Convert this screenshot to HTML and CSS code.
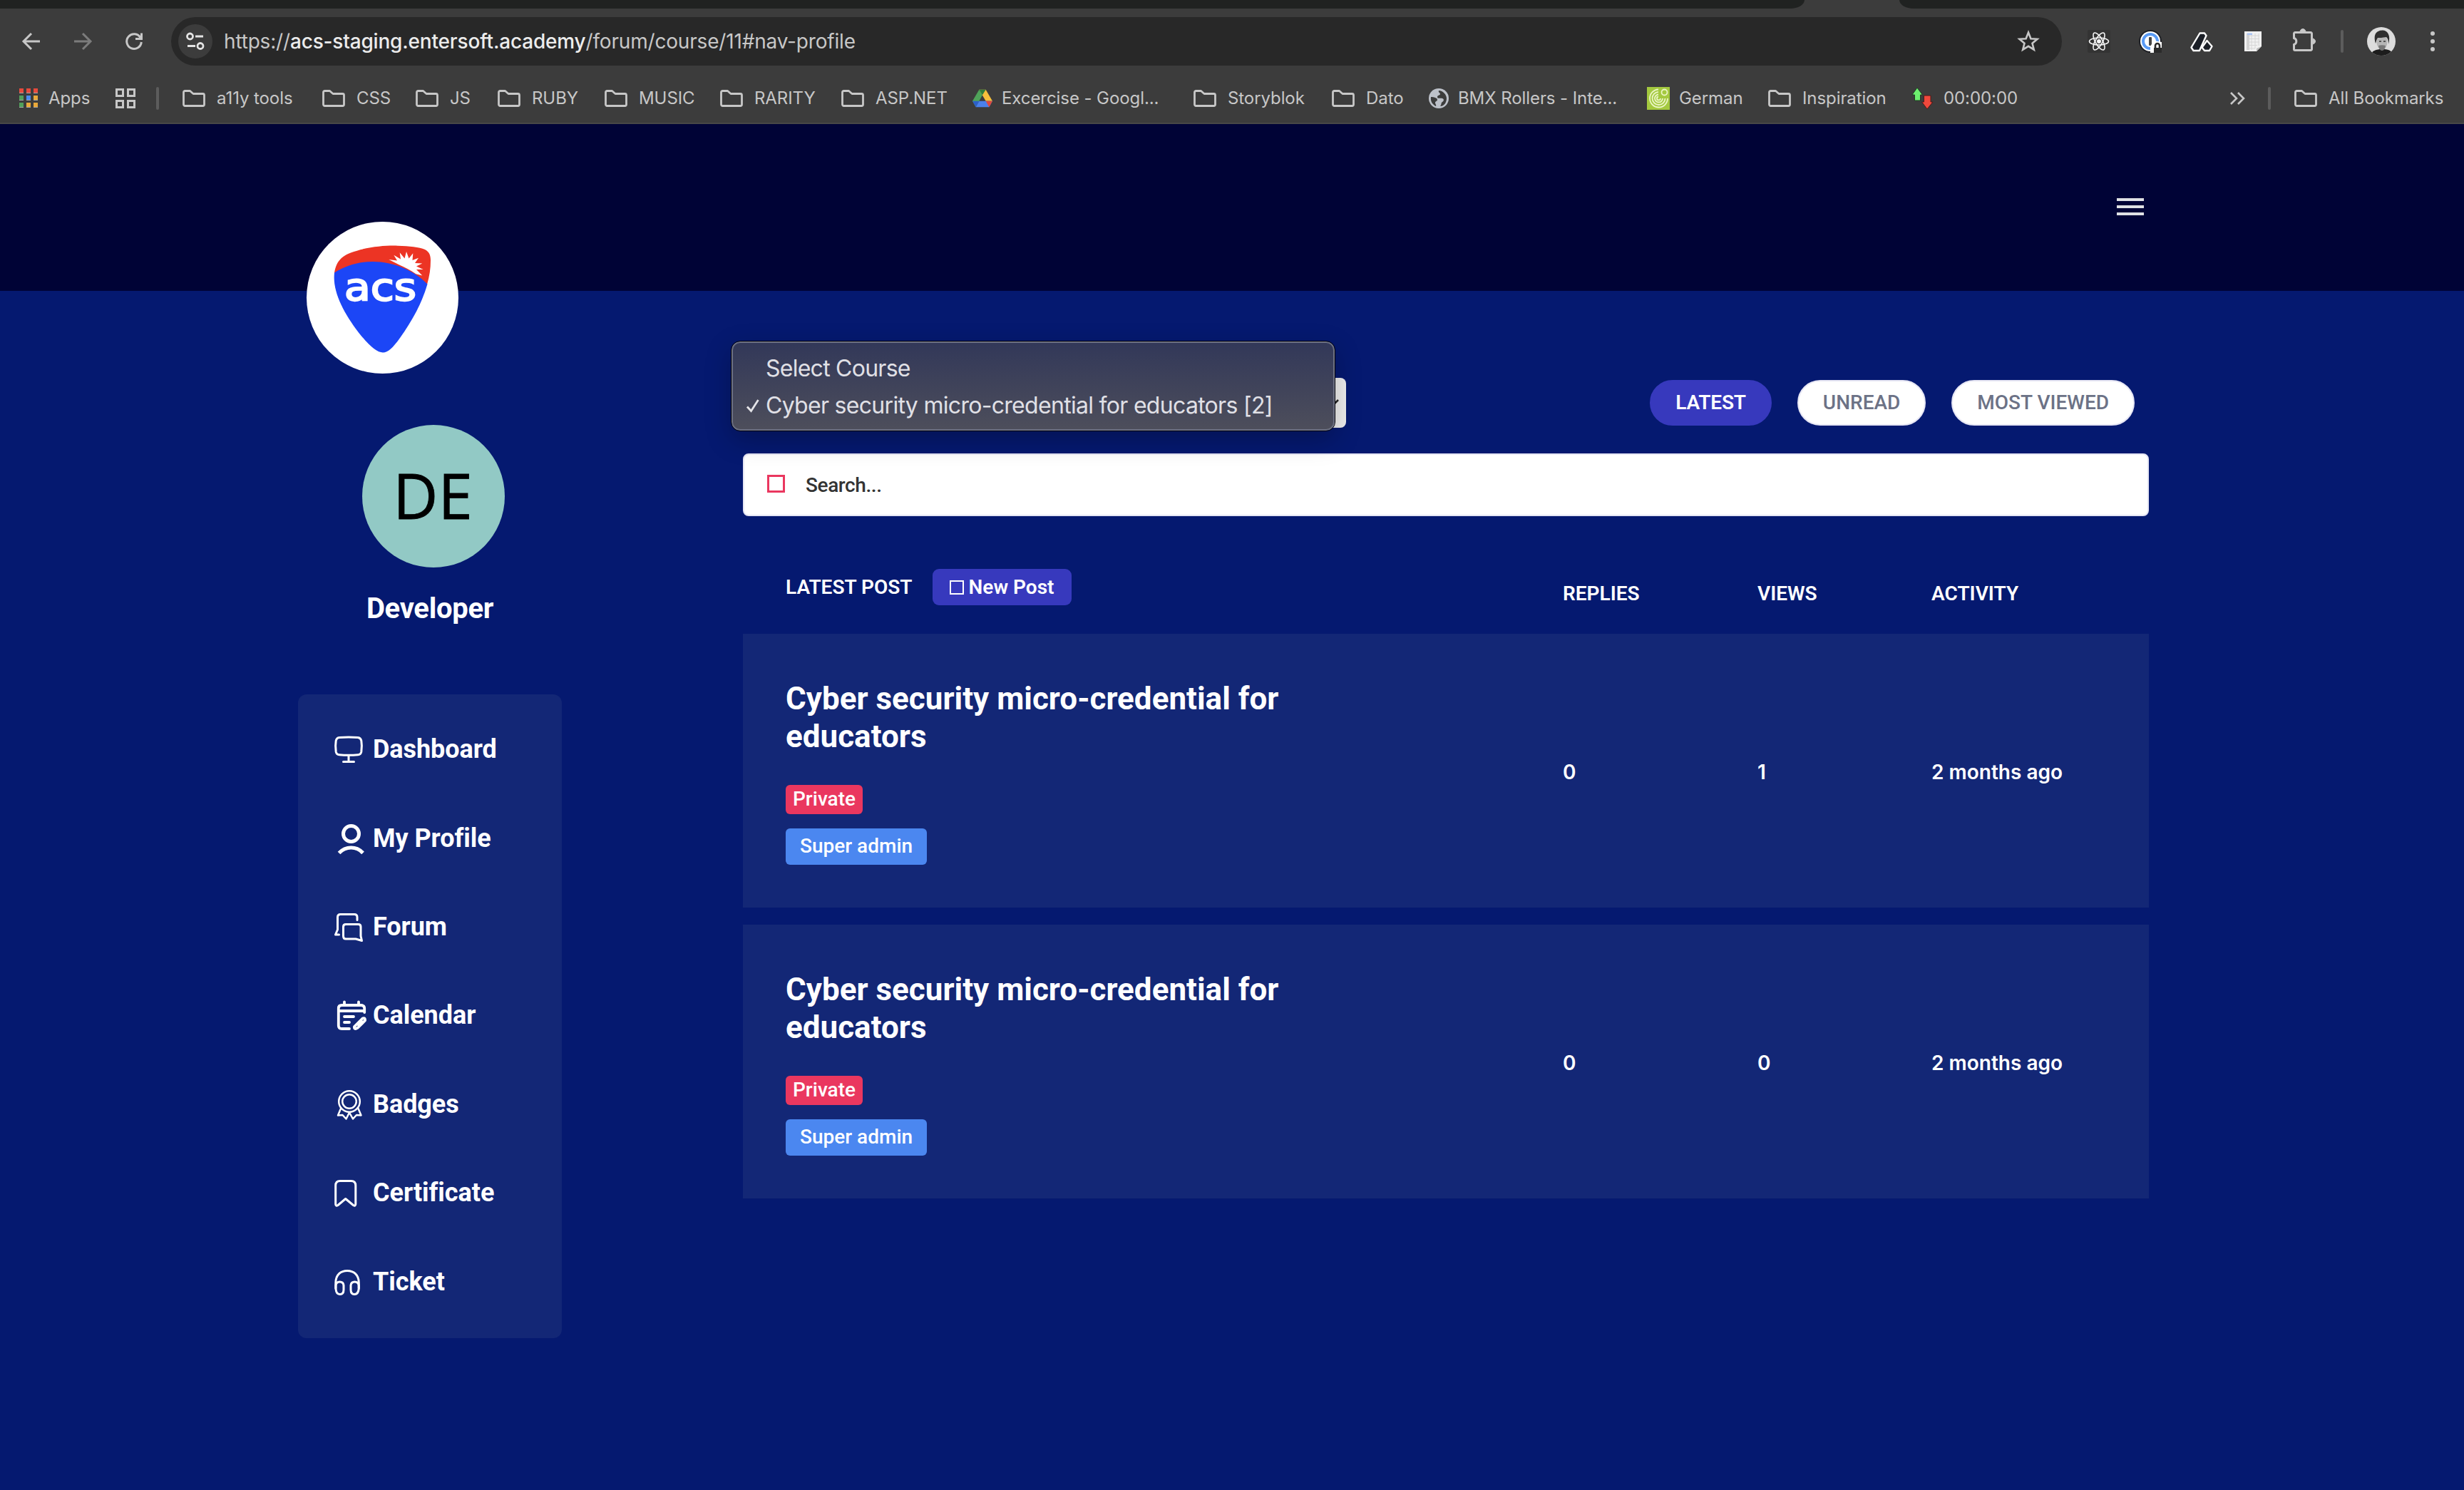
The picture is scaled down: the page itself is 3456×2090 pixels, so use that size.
FILE: index.html
```html
<!DOCTYPE html>
<html lang="en">
<head>
<meta charset="utf-8">
<title>Forum</title>
<link rel="stylesheet" href="styles.css">
</head>
<body>
<svg class="defs" width="0" height="0" aria-hidden="true">
  <symbol id="folder" viewBox="0 0 32 26">
    <path d="M3.500 2.500H10.500l4.500 4H28.500a2 2 0 0 1 2 2V21.500a2 2 0 0 1-2 2H3.500a2 2 0 0 1-2-2V4.500a2 2 0 0 1 2-2z" fill="none" stroke="currentColor" stroke-width="2.800" stroke-linejoin="round"/>
  </symbol>
</svg>

<div class="browser">
  <div class="tabstrip"><div class="strip strip-left"></div><div class="active-tab"></div><div class="strip strip-right"></div></div>
  <div class="toolbar">
    <div class="nav-buttons">
      <svg class="nav-icon" viewBox="0 0 32 32"><path d="M28 16H5M16 5L5 16l11 11" fill="none" stroke="#c7c7c7" stroke-width="3"/></svg>
      <svg class="nav-icon" viewBox="0 0 32 32"><path d="M4 16H27M16 5L27 16l-11 11" fill="none" stroke="#7c7c7c" stroke-width="3"/></svg>
      <svg class="nav-icon" viewBox="0 0 32 32"><path d="M25 11A10.300 10.300 0 1 0 26.300 17M26.500 4.500V12.500H18" fill="none" stroke="#c7c7c7" stroke-width="3"/></svg>
    </div>
    <div class="omnibox">
      <div class="site-info"><svg viewBox="0 0 48 48"><g fill="none" stroke="#e3e3e3" stroke-width="2.800"><circle cx="16.500" cy="17" r="4"/><path d="M24 17H35M13 30.500H24"/><circle cx="31" cy="30.500" r="4"/></g></svg></div>
      <div class="url">https://<b>acs-staging.entersoft.academy</b>/forum/course/11#nav-profile</div>
      <svg class="star" viewBox="0 0 32 32"><path d="M16 3.500l3.400 8.700 9.100.6-7 5.900 2.300 9L16 22.800l-7.800 4.900 2.300-9-7-5.900 9.100-.6z" fill="none" stroke="#c7c7c7" stroke-width="2.600"/></svg>
    </div>
    <div class="extensions">
      <svg viewBox="0 0 32 32"><rect width="32" height="32" rx="2" fill="#333"/><g fill="none" stroke="#f4f4f4" stroke-width="1.600"><ellipse cx="16" cy="16" rx="13.500" ry="5"/><ellipse cx="16" cy="16" rx="13.500" ry="5" transform="rotate(60 16 16)"/><ellipse cx="16" cy="16" rx="13.500" ry="5" transform="rotate(120 16 16)"/></g><circle cx="16" cy="16" r="3" fill="#f4f4f4"/></svg>
      <svg viewBox="0 0 32 32"><circle cx="16" cy="16" r="16" fill="#1d1f24"/><circle cx="16" cy="16" r="14" fill="#fff"/><circle cx="16" cy="16" r="10" fill="#fff" stroke="#5a9bf5" stroke-width="4"/><rect x="14" y="10" width="4" height="12" rx="1" fill="#444"/><path d="M16 23L21 15 32 17V32H16z" fill="#fff"/><path d="M21 25H32V32H21z" fill="#2b2b2b"/><path d="M23 25V22a3 3 0 0 1 6 0V25" fill="none" stroke="#2b2b2b" stroke-width="2.600"/></svg>
      <svg viewBox="0 0 32 32"><path d="M13.500 4.500H20L22.500 8 13 29H4.500L1.500 24.500z" fill="#1b1f27" stroke="#fff" stroke-width="2.400" stroke-linejoin="round"/><path d="M23.500 15L30.500 23 27 29H20L16.500 24.500z" fill="#1b1f27" stroke="#fff" stroke-width="2.400" stroke-linejoin="round"/></svg>
      <svg viewBox="0 0 32 32"><path d="M4 2H28V23L21 30H4z" fill="#f1f1f1"/><path d="M28 23L21 30V26z" fill="#bdbdbd"/><path d="M7 8H25M7 12.500H25M7 17H25M7 21.500H22M7 26H19M14 5V28M19 5V26M24 5V22" stroke="#d6d6d6" stroke-width="1"/><path d="M7 5H11V28H7z" fill="#d2d2d2"/><path d="M8 4.500H15V7H8z" fill="#a9c4f5"/></svg>
      <svg viewBox="0 0 32 32"><path d="M3 3.500H25a1.500 1.500 0 0 1 1.500 1.500V27a1.500 1.500 0 0 1-1.500 1.500H3A1.500 1.500 0 0 1 1.500 27V20.500a4.700 4.700 0 0 0 0-9V5A1.500 1.500 0 0 1 3 3.500z" fill="none" stroke="#c7c7c7" stroke-width="3"/><path d="M10 3a4 4.500 0 0 1 8 0zM27 12a4.500 4 0 0 1 0 8z" fill="#c7c7c7" stroke="#c7c7c7"/></svg>
    </div>
    <div class="bar-sep"></div>
    <svg class="avatar-mini" viewBox="0 0 40 40"><defs><clipPath id="face"><circle cx="20" cy="20" r="20"/></clipPath></defs><g clip-path="url(#face)"><rect width="40" height="40" fill="#dcdcdc"/><path d="M5 40C6 33 13 31 21 31s14 1 16 9z" fill="#1c1c1c"/><ellipse cx="21" cy="21" rx="7.500" ry="11" fill="#b5b5b5"/><path d="M12 23C8 9 14 5 21 4.500s13 6 9 19.500c0-6-1-8-3-10-6 1-9 1-12 1-2 3-2 5-3 8z" fill="#2e2e2e"/><path d="M16 26q5-1.500 10 0-1 7-5 7t-5-7z" fill="#777"/><path d="M17 20h3M23 20h3" stroke="#333" stroke-width="1.500"/></g></svg>
    <svg class="kebab" viewBox="0 0 8 32"><g fill="#c7c7c7"><circle cx="4" cy="5" r="3"/><circle cx="4" cy="16" r="3"/><circle cx="4" cy="27" r="3"/></g></svg>
  </div>

  <div class="bookmarks">
    <div class="bm bm-apps"><svg class="bm-icon" viewBox="0 0 28 28"><path d="M0 .5h6v6.500H0zM10 .5h6v6.500h-6zM20 .5h6v6.500h-6zM0 10.500h6V17H0zM10 10.500h6V17h-6zM20 10.500h6V17h-6zM0 20.500h6V27H0zM10 20.500h6V27h-6zM20 20.500h6V27h-6z" fill="#a5a5a5"/><path d="M0 0h6v6H0zM10 0h6v6h-6zM20 0h6v6h-6z" fill="#e74a3c"/><path d="M0 10h6v6H0zM0 20h6v6H0z" fill="#51a05a"/><path d="M10 10h6v6h-6z" fill="#4a8af0"/><path d="M20 10h6v6h-6zM10 20h6v6h-6zM20 20h6v6h-6z" fill="#e9a93a"/></svg><span>Apps</span></div>
    <div class="bm"><svg class="bm-icon" viewBox="0 0 28 28"><g fill="none" stroke="#c7c7c7" stroke-width="3"><path d="M1.500 1.500h9v9h-9zM17.500 1.500h9v9h-9zM1.500 17.500h9v9h-9zM17.500 17.500h9v9h-9z"/></g></svg></div>
    <div class="bm"><i class="bar-line"></i></div>
    <div class="bm"><svg class="folder"><use href="#folder"/></svg><span>a11y tools</span></div>
    <div class="bm"><svg class="folder"><use href="#folder"/></svg><span>CSS</span></div>
    <div class="bm"><svg class="folder"><use href="#folder"/></svg><span>JS</span></div>
    <div class="bm"><svg class="folder"><use href="#folder"/></svg><span>RUBY</span></div>
    <div class="bm"><svg class="folder"><use href="#folder"/></svg><span>MUSIC</span></div>
    <div class="bm"><svg class="folder"><use href="#folder"/></svg><span>RARITY</span></div>
    <div class="bm"><svg class="folder"><use href="#folder"/></svg><span>ASP.NET</span></div>
    <div class="bm bm-site"><svg class="bm-icon" viewBox="0 0 30 28"><path d="M10 1H20L30 18H20z" fill="#f6bf3c"/><path d="M10 1L15 9 5 27 0 18z" fill="#4fa35a"/><path d="M10 1h10l-5 8z" fill="#2f7d3c"/><path d="M5 27L10 18H30L25 27z" fill="#4a80ec"/><path d="M0 18H10L5 27z" fill="#2c60c9"/><path d="M30 18H20L25 27z" fill="#e0493c"/></svg><span>Excercise - Googl...</span></div>
    <div class="bm"><svg class="folder"><use href="#folder"/></svg><span>Storyblok</span></div>
    <div class="bm"><svg class="folder"><use href="#folder"/></svg><span>Dato</span></div>
    <div class="bm bm-site"><svg class="bm-icon" viewBox="0 0 28 28"><circle cx="14" cy="14" r="14" fill="#bdc1c9"/><path d="M3 12c4 0 9 1 9 4 0 2-3 2-3 4s2 3 1 5C6 23 2 19 3 12zM14 3c-1 3 2 3 2 5s-4 1-4 4 4 1 7 2 2 4 0 5-1 4-3 6c6 0 9-6 9-11S20 3 14 3z" fill="#3c3c3c"/></svg><span>BMX Rollers - Inte...</span></div>
    <div class="bm bm-site"><svg class="bm-goethe" viewBox="0 0 32 32"><rect width="32" height="32" fill="#a4c93f"/><g fill="none" stroke="#eaf5c4" stroke-width="1.800"><circle cx="24.500" cy="7.500" r="4"/><path d="M16 3.500A12.500 12.500 0 1 0 29 16"/><path d="M16 7A9 9 0 1 0 25.500 16"/><path d="M16 10.500A5.500 5.500 0 1 0 22 16"/><path d="M16 13.500A2.500 2.500 0 1 0 19 16"/></g></svg><span>German</span></div>
    <div class="bm"><svg class="folder"><use href="#folder"/></svg><span>Inspiration</span></div>
    <div class="bm bm-site"><svg class="bm-goethe" viewBox="0 0 32 32"><path d="M8 1L15.500 11H12.500V19H4.500V11H1z" fill="#6df06f" stroke="#1f3f22" stroke-width="1"/><path d="M22 31L14.500 21H17.500V12H27V21H30z" fill="#f0483c" stroke="#4b1a18" stroke-width="1"/></svg><span>00:00:00</span></div>
    <div class="bm"><svg class="chevrons" viewBox="0 0 22 20"><path d="M2 2L10 10 2 18M12 2L20 10 12 18" fill="none" stroke="#c7c7c7" stroke-width="2.600"/></svg></div>
    <div class="bm"><i class="bar-line"></i></div>
    <div class="bm"><svg class="folder"><use href="#folder"/></svg><span>All Bookmarks</span></div>
  </div>
</div>

<header class="site-header">
  <button class="hamburger" aria-label="Menu"><i></i><i></i><i></i></button>
</header>

<div class="page">
  <aside class="sidebar">
    <a class="logo"><svg viewBox="0 0 213 213">
      <circle cx="106.500" cy="106.500" r="106.500" fill="#fff"/>
      <path d="M39 72C41 60 45 50 62 43.500 84 35 112 33 128 33.700c16 .3 30 1.800 38 5.300 6 3 8 8 8 15 0 12-1.500 22-5 34z" fill="#ec3424"/>
      <path d="M39 71.500C56 61 74 56 93 56c29 0 57 12 76.500 31.500C162 114 148 139 131 163c-10 14-17 20.500-24 20.500-8 0-18-8-34-28C52 128 36 98 39 71.500z" fill="#1c46f6"/>
      <path d="M130 60.600L115.300 53 127 54.500 122.300 46.700 132 52.500 130.700 43.200 137.500 51.500 140 42 143.500 51.500 149.300 44.300 148.500 54 157 50.700 152 58 162.300 58.600 154 62.500 163.700 66.900 154 67 162.300 75.600 153.300 73.200C146 68 138 64 130 60.600z" fill="#fff"/>
      <text x="53" y="109.500" textLength="101" lengthAdjust="spacingAndGlyphs" class="logo-text">acs</text>
    </svg></a>
    <div class="user">
      <div class="initials">DE</div>
      <div class="user-name">Developer</div>
    </div>
    <nav class="menu">
      <a><svg viewBox="0 0 52 52"><g class="ln"><path d="M12 9.500Q25 8.500 38 9.500 42 10 42.800 14 44 21 42.800 29.500 42 33.500 38 33.700 25 35 12 33.700 8 33.500 7.200 29.500 6 21 7.200 14 8 10 12 9.500zM25 34.500V43.500M17.500 43.500H32.500"/></g></svg><span>Dashboard</span></a>
      <a><svg viewBox="0 0 52 52"><g class="ln bold"><circle cx="28.500" cy="19.500" r="11"/><path d="M11.500 46.500Q18.500 39 28.500 39T45 46.500"/></g></svg><span>My Profile</span></a>
      <a><svg viewBox="0 0 52 52"><g class="ln"><path d="M37 16.500V12.500Q37 8.500 33 8.500H13.500Q9.500 8.500 9.500 12.500V30L6.500 37H11.500M17.500 26Q17.500 22.500 21 22.500H38.500Q42 22.500 42 26V39L43.500 45.500 35 43H21Q17.500 43 17.500 39z"/></g></svg><span>Forum</span></a>
      <a><svg viewBox="0 0 52 52"><g class="ln mid"><path d="M19 7.500V12M39 7.500V12M26 45H15.500Q10.800 45 10.800 40.500V16.500Q10.800 12 15.500 12H42.500Q47.200 12 47.200 16.500V22M10.800 20H47.200M19 28H32M19 36H26M35 45Q32.500 45.500 33 42L44.500 30.500Q48.500 29 48 33.500L38 43.500 35 45zM38 39L43 34.500"/></g></svg><span>Calendar</span></a>
      <a><svg viewBox="0 0 52 52"><g class="ln thin"><circle cx="26" cy="22" r="14.800"/><circle cx="26" cy="22" r="9.800"/><path d="M14 32L10 41.500 16.500 41 21.500 46.500 26 37.500 31 46.500 36 41 42.500 41.500 38.500 32"/></g></svg><span>Badges</span></a>
      <a><svg viewBox="0 0 52 52"><g class="ln"><path d="M6.700 42V16Q6.700 9.500 13 9.500H28.500Q34.800 9.500 34.800 16V42Q34.500 45.500 31.500 43.500L20.700 34.500 10 43.500Q7 45.500 6.700 42z"/></g></svg><span>Certificate</span></a>
      <a><svg viewBox="0 0 52 52"><g class="ln"><path d="M6.800 35V27.500C6.800 16 14 10.500 23 10.500S39.300 16 39.300 27.500V35"/><path d="M7 31Q7.500 26 12.500 26T18 31V37Q18 43.500 12.800 43.500T7 36zM39.200 31Q38.500 26 33.500 26T28 31V37Q28 43.500 33.200 43.500T39.200 36z"/></g></svg><span>Ticket</span></a>
    </nav>
  </aside>

  <main class="forum">
    <div class="filters">
      <div class="course-select">
        <svg class="caret" viewBox="0 0 20 12"><path d="M2 2L10 10 18 2" fill="none" stroke="#222" stroke-width="2.500"/></svg>
        <div class="options">
          <div class="option"><i></i><span class="opt-a">Select Course</span></div>
          <div class="option"><i><svg viewBox="0 0 20 20"><path d="M2 11.500L7.500 17.500 17.500 2" fill="none" stroke="#e4e4e8" stroke-width="2.800"/></svg></i><span class="opt-b">Cyber security micro-credential for educators [2]</span></div>
        </div>
      </div>
      <div class="pills"><a class="pill active">LATEST</a><a class="pill">UNREAD</a><a class="pill">MOST VIEWED</a></div>
    </div>
    <div class="search"><i class="box"></i><span>Search...</span></div>
    <div class="thead">
      <div class="th-post"><span>LATEST POST</span><a class="new-post"><i class="box"></i>New Post</a></div>
      <div>REPLIES</div><div>VIEWS</div><div>ACTIVITY</div>
    </div>
    <article class="post">
      <div class="topic"><h2>Cyber security micro-credential for educators</h2><span class="tag private">Private</span><span class="tag author">Super admin</span></div>
      <div class="stat">0</div><div class="stat">1</div><div class="stat">2 months ago</div>
    </article>
    <article class="post">
      <div class="topic"><h2>Cyber security micro-credential for educators</h2><span class="tag private">Private</span><span class="tag author">Super admin</span></div>
      <div class="stat">0</div><div class="stat">0</div><div class="stat">2 months ago</div>
    </article>
  </main>
</div>
</body>
</html>
```
FILE: styles.css
```css
* { box-sizing: border-box; }
body { margin: 0; width: 3456px; height: 2090px; overflow: hidden; background: #051970; color: #fff; font-family: Roboto, "Liberation Sans", sans-serif; }
svg { display: block; flex: none; overflow: visible; }
.defs { position: absolute; }
i { display: block; flex: none; }

/* browser frame */
.browser { height: 174px; background: #3c3c3c; border-bottom: 2px solid #474747; font-family: Inter, "Liberation Sans", sans-serif; color: #c7c7c7; }
.tabstrip { display: flex; height: 12px; }
.strip { background: #202221; }
.strip-left { width: 2531px; border-bottom-right-radius: 20px 12px; }
.active-tab { width: 133px; }
.strip-right { flex: 1; border-bottom-left-radius: 20px 12px; }
.toolbar { display: flex; align-items: center; height: 92px; }
.nav-buttons { display: flex; gap: 40px; width: 240px; padding-left: 28px; }
.nav-icon { width: 32px; height: 32px; }
.omnibox { display: flex; align-items: center; width: 2652px; height: 68px; padding: 0 31px 0 10px; border-radius: 34px; background: #282828; }
.site-info { width: 48px; height: 48px; border-radius: 50%; background: #3c3c3c; }
.url { flex: 1; margin-left: 16px; font-size: 28px; letter-spacing: -0.180px; white-space: nowrap; }
.url b { font-weight: 500; color: #ececec; }
.star { width: 32px; height: 32px; }
.extensions { display: flex; align-items: center; gap: 40px; margin-left: 36px; }
.extensions svg { width: 32px; height: 32px; }
.bar-sep { width: 4px; height: 32px; margin-left: 35px; border-radius: 2px; background: #5c5c5c; }
.avatar-mini { width: 40px; height: 40px; margin-left: 33px; }
.kebab { width: 8px; height: 32px; margin-left: 48px; }

.bookmarks { display: grid; height: 68px; align-items: center; padding-left: 27px; font-size: 24px; letter-spacing: -0.080px;
  grid-template-columns: 135px 57px 37px 196px 131px 115px 150px 162px 170px 184px 310px 194px 136px 306px 170px 201px 446px 54px 37px 240px; }
.bm { display: flex; align-items: center; gap: 16px; white-space: nowrap; }
.bm span { margin-top: -2px; }
.bm-icon { width: 28px; height: 28px; }
.bm-apps { gap: 13px; }
.bm-site { gap: 13px; }
.bm-goethe { width: 32px; height: 32px; }
.folder { width: 32px; height: 26px; }
.bar-line { width: 4px; height: 32px; border-radius: 2px; background: #5c5c5c; }
.chevrons { width: 22px; height: 20px; }

/* site header */
.site-header { display: flex; justify-content: flex-end; height: 234px; padding: 104px 449px 0 0; background: #000336; }
.hamburger { display: flex; flex-direction: column; gap: 6px; width: 38px; height: 26px; padding: 0; border: 0; background: none; }
.hamburger i { height: 4px; background: #dfe1e4; }

.page { display: flex; padding-left: 418px; }

/* sidebar */
.sidebar { width: 370px; }
.logo { display: block; width: 213px; margin: -97px 0 0 12px; }
.logo-text { font-family: "DejaVu Sans", sans-serif; font-size: 53px; fill: #fff; stroke: #fff; stroke-width: 2.200px; }
.user { display: flex; flex-direction: column; align-items: center; margin-top: 72px; }
.initials { width: 200px; height: 200px; margin-left: 10px; padding-right: 2px; border-radius: 50%; background: #92c9c5; color: #000; font: 87px/197px "Open Sans", "Noto Sans", sans-serif; text-align: center; -webkit-text-stroke: .8px #000; }
.user-name { margin: 34px 0 0; font-size: 40px; font-weight: 700; line-height: 48px; letter-spacing: -0.300px; }
.menu { margin-top: 96px; height: 903px; padding: 15px 0 0 46px; border-radius: 12px; background: #132776; }
.menu a { display: flex; align-items: center; gap: 7px; height: 124.400px; font-size: 36px; font-weight: 700; letter-spacing: -0.050px; }
.menu svg { width: 52px; height: 52px; }
.ln { fill: none; stroke: #fff; stroke-width: 3px; stroke-linecap: round; stroke-linejoin: round; }
.ln.thin { stroke-width: 2.500px; }
.ln.mid { stroke-width: 3.800px; }
.ln.bold { stroke-width: 5px; stroke-linecap: butt; }

/* forum */
.forum { width: 1972px; margin-left: 254px; padding-top: 122px; font-size: 28px; font-weight: 500; }
.filters { display: flex; justify-content: space-between; height: 70px; padding-right: 20px; }
.course-select { position: relative; width: 846px; height: 70px; border-radius: 8px; background: #efefef; }
.caret { position: absolute; right: 9px; top: 29px; width: 20px; height: 12px; }
.options { position: absolute; left: -16px; top: -51px; width: 846px; height: 125px; padding: 9.500px 6px; border: 2px solid #6c7082; border-radius: 12px; outline: 1px solid #04040c; background: linear-gradient(#323859, #4d4e5b); box-shadow: 0 12px 36px rgba(0, 0, 0, .25); font: 400 32px/52px Inter, "Liberation Sans", sans-serif; color: #e0e0e6; }
.option { display: flex; align-items: center; height: 52px; white-space: nowrap; }
.option i { width: 28px; margin-left: 12px; }
.option svg { width: 20px; height: 20px; }
.opt-a { letter-spacing: -0.750px; }
.opt-b { letter-spacing: -0.700px; }
.pills { display: flex; gap: 36px; margin-top: 3px; }
.pill { height: 64px; padding: 0 34px; border: 2px solid #e6e6f4; border-radius: 32px; background: #fff; color: #6c7286; line-height: 59px; }
.pill.active { background: #3739bd; border-color: #3739bd; color: #fff; font-weight: 600; letter-spacing: -0.200px; }
.search { display: flex; align-items: center; height: 88px; margin-top: 36px; padding-left: 32px; border: 2px solid #e6e6f4; border-radius: 8px; background: #fff; color: #333; letter-spacing: -0.400px; }
.box { width: 20px; height: 20px; border: 2px solid currentColor; }
.search .box { width: 25px; height: 25px; margin: -3px 29px 0 0; border: 3px solid #ea375f; }
.thead, .post { display: grid; grid-template-columns: 1090px 273px 244px 1fr; align-items: center; padding-left: 60px; }
.thead { height: 165px; padding-top: 52px; font-weight: 600; }
.th-post { display: flex; align-items: center; gap: 28px; margin-top: -18px; }
.new-post { display: flex; align-items: center; gap: 7px; width: 195px; height: 51px; padding-left: 24px; border-radius: 9px; background: #3739bd; }
.post { height: 384px; margin-bottom: 24px; background: #132776; }
.stat { padding-top: 4px; font-family: Inter, "Liberation Sans", sans-serif; font-weight: 600; }
.topic { display: flex; flex-direction: column; align-items: flex-start; height: 384px; padding-top: 65px; }
.topic h2 { width: 720px; margin: 0 0 40px; font-size: 44px; line-height: 53.300px; font-weight: 700; }
.tag { height: 41px; padding: 0 10px; border-radius: 6px; line-height: 40px; font-weight: 500; }
.private { background: #ea375f; }
.author { height: 51px; margin-top: 20px; padding: 0 20px; line-height: 50px; background: #4b87f0; }
```
